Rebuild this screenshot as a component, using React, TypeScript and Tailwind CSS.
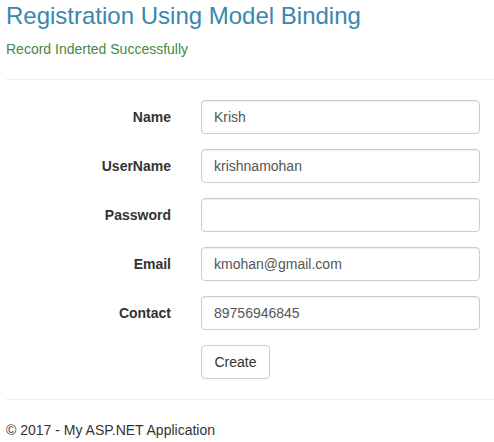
const fields = [
  { label: "Name", value: "Krish" },
  { label: "UserName", value: "krishnamohan" },
  { label: "Password", value: "" },
  { label: "Email", value: "kmohan@gmail.com" },
  { label: "Contact", value: "89756946845" },
];

export default function App() {
  return (
    <div className="min-h-[442px] bg-white pl-[6px] text-[14px] leading-[20px] text-[#333] font-['Liberation_Sans',Arial,sans-serif]">
      <h2 className="mt-[3px] text-[24px] leading-[26px] font-normal text-[#3a87ad]">
        Registration Using Model Binding
      </h2>
      <p className="mt-[10px] text-[#468847]">Record Inderted Successfully</p>
      <hr className="mt-[20px] border-t border-[#eee]" />

      <form className="mt-[20px] flex flex-col gap-[15px]" onSubmit={(e) => e.preventDefault()}>
        {fields.map((f) => (
          <div key={f.label} className="flex items-start">
            <label className="w-[165px] pt-[7px] text-right font-bold">{f.label}</label>
            <input
              type={f.label === "Password" ? "password" : "text"}
              defaultValue={f.value}
              className="ml-[30px] h-[34px] w-[279px] rounded-[4px] border border-[#ccc] px-[12px] py-[6px] text-[14px] text-[#555] shadow-[inset_0_1px_1px_rgba(0,0,0,0.075)] outline-none"
            />
          </div>
        ))}
        <div className="flex">
          <button
            type="submit"
            className="ml-[195px] h-[34px] w-[69px] rounded-[4px] border border-[#ccc] bg-white text-[14px] text-[#333]"
          >
            Create
          </button>
        </div>
      </form>

      <hr className="mt-[20px] border-t border-[#eee]" />
      <footer className="mt-[20px]">
        <p>© 2017 - My ASP.NET Application</p>
      </footer>
    </div>
  );
}
